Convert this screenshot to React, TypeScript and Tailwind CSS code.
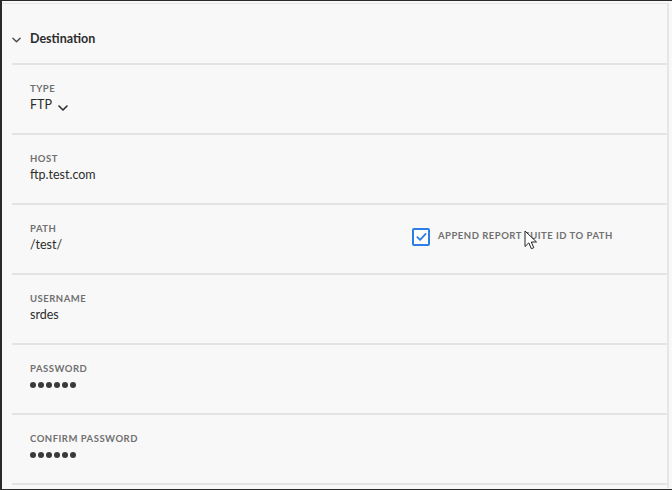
import React from "react";

const font = { fontFamily: "Lato, 'Liberation Sans', sans-serif" };

function Chevron({ className }: { className?: string }) {
  return (
    <svg viewBox="0 0 10 6" className={className} fill="none">
      <path d="M1 1l4 4 4-4" stroke="currentColor" strokeWidth="1.6" strokeLinecap="round" strokeLinejoin="round" />
    </svg>
  );
}

function Field({ label, children, extra }: { label: string; children: React.ReactNode; extra?: React.ReactNode }) {
  return (
    <div className="flex h-[70px] border-b-2 border-[#e4e4e4]">
      <div className="w-[400px] pl-[18px] pt-[18px]">
        <div className="text-[9.5px] leading-[12px] font-bold tracking-[0.5px] text-[#707070]">{label}</div>
        <div className="mt-[1px] text-[12.5px] leading-[18px] text-[#2c2c2c]">{children}</div>
      </div>
      {extra}
    </div>
  );
}

function Dots() {
  return (
    <div className="flex h-[18px] items-center gap-[2px]">
      {Array.from({ length: 6 }).map((_, i) => (
        <span key={i} className="h-[6px] w-[6px] rounded-full bg-[#3a3a3a]" />
      ))}
    </div>
  );
}

export default function App() {
  return (
    <div className="h-[490px] w-[672px] overflow-hidden border-l-2 border-t border-b border-[#2a2a2a] bg-[#f8f8f8]" style={font}>
      <div className="mt-[2px] h-[485px] w-[667px] border-t border-r-2 border-[#e6e6e6]">
        <div className="flex h-[59px] items-center pl-[10px] pt-[12px]">
          <Chevron className="h-[6px] w-[9px] text-[#4b4b4b]" />
          <span className="ml-[9px] text-[12.5px] font-bold text-[#2c2c2c]">Destination</span>
        </div>
        <div className="ml-[10px] border-t-2 border-[#e4e4e4]">
          <Field label="TYPE">
            <span className="inline-flex items-center">
              FTP
              <Chevron className="ml-[6px] mt-[5px] h-[6px] w-[10px] text-[#2c2c2c]" />
            </span>
          </Field>
          <Field label="HOST">ftp.test.com</Field>
          <Field
            label="PATH"
            extra={
              <div className="relative flex items-center pb-[5px]">
                <span className="flex h-[18px] w-[18px] items-center justify-center rounded-[2px] border-2 border-[#2d7fe6] bg-white">
                  <svg viewBox="0 0 12 10" className="h-[10px] w-[11px]" fill="none">
                    <path d="M1.5 5.2l3 3 6-6.5" stroke="#2d7fe6" strokeWidth="2" strokeLinecap="round" strokeLinejoin="round" />
                  </svg>
                </span>
                <span className="ml-[8px] text-[9.5px] font-bold tracking-[0.5px] text-[#707070]">
                  APPEND REPORT SUITE ID TO PATH
                </span>
                <svg viewBox="0 0 13 20" className="absolute left-[112px] top-[25px] h-[20px] w-[13px]">
                  <path d="M1 1v15.5l3.8-3.6 2.6 5.8 2.4-1-2.5-5.7h5.2z" fill="#fff" stroke="#222" strokeWidth="1" strokeLinejoin="round" />
                </svg>
              </div>
            }
          >
            /test/
          </Field>
          <Field label="USERNAME">srdes</Field>
          <Field label="PASSWORD">
            <Dots />
          </Field>
          <Field label="CONFIRM PASSWORD">
            <Dots />
          </Field>
        </div>
      </div>
    </div>
  );
}
